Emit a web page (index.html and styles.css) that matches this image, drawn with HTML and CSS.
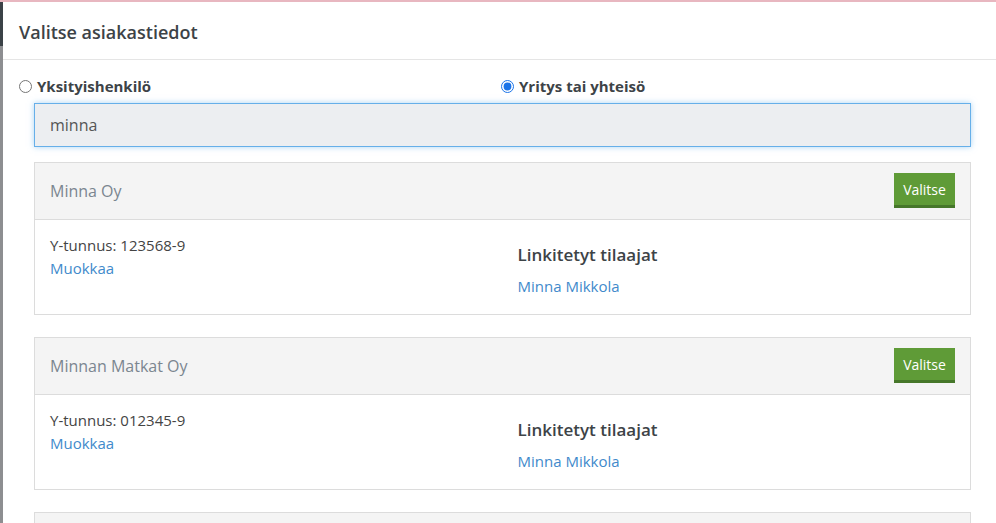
FILE: index.html
```html
<!DOCTYPE html>
<html lang="fi">
<head>
<meta charset="utf-8">
<title>Valitse asiakastiedot</title>
<link rel="stylesheet" href="styles.css">
</head>
<body>
<div class="page">
  <div class="stripe"><div class="stripe-top"></div></div>
  <div class="modal">
    <div class="modal-header">
      <h4 class="modal-title">Valitse asiakastiedot</h4>
    </div>
    <div class="modal-body">
      <div class="radio-row">
        <label class="radio"><input type="radio" name="type"> Yksityishenkilö</label>
        <label class="radio"><input type="radio" name="type" checked> Yritys tai yhteisö</label>
      </div>
      <div class="search-wrap">
        <input class="search" type="text" value="minna">
      </div>
      <div class="card">
        <div class="card-header">
          <span class="card-title">Minna Oy</span>
          <button class="btn">Valitse</button>
        </div>
        <div class="card-body">
          <div class="col">
            <div class="info">Y-tunnus: 123568-9</div>
            <a class="link" href="#">Muokkaa</a>
          </div>
          <div class="col">
            <div class="col-heading">Linkitetyt tilaajat</div>
            <a class="link link-person" href="#">Minna Mikkola</a>
          </div>
        </div>
      </div>
      <div class="card">
        <div class="card-header">
          <span class="card-title">Minnan Matkat Oy</span>
          <button class="btn">Valitse</button>
        </div>
        <div class="card-body">
          <div class="col">
            <div class="info">Y-tunnus: 012345-9</div>
            <a class="link" href="#">Muokkaa</a>
          </div>
          <div class="col">
            <div class="col-heading">Linkitetyt tilaajat</div>
            <a class="link link-person" href="#">Minna Mikkola</a>
          </div>
        </div>
      </div>
      <div class="card card-partial">
        <div class="card-header"></div>
      </div>
    </div>
  </div>
</div>
</body>
</html>
```
FILE: styles.css
```css
* { box-sizing: border-box; }
html, body { margin: 0; padding: 0; height: 100%; overflow: hidden; }
body {
  font-family: "Open Sans", "Liberation Sans", sans-serif;
  color: #444;
  background: #fff;
}
.page {
  display: flex;
  height: 523px;
  border-top: 2px solid #e8b7c0;
}
.stripe {
  width: 3px;
  flex: none;
  background: #8d8e91;
  display: flex;
  flex-direction: column;
}
.stripe-top {
  height: 44px;
  background: #3b4247;
}
.modal {
  flex: 1;
  background: #fff;
  overflow: hidden;
}
.modal-header {
  height: 58px;
  border-bottom: 1px solid #e5e5e5;
  display: flex;
  align-items: center;
  padding: 0 16px;
}
.modal-title {
  margin: 0;
  font-size: 18px;
  font-weight: 600;
  color: #3d4347;
  padding-top: 2px;
}
.modal-body {
  padding: 14px 25px 0 16px;
}
.radio-row {
  display: grid;
  grid-template-columns: 482px 1fr;
  height: 24px;
  align-items: center;
}
.radio {
  display: flex;
  align-items: center;
  gap: 5px;
  font-size: 15px;
  font-weight: 700;
  color: #3d4347;
}
.radio input {
  margin: 0;
  width: 13px;
  height: 13px;
  accent-color: #1a73e8;
}
.search-wrap {
  padding: 5px 0 0 15px;
  margin-bottom: 15px;
}
.search {
  display: block;
  width: 100%;
  height: 44px;
  border: 1px solid #66afe9;
  background: #eceef1;
  box-shadow: 0 0 6px rgba(102, 175, 233, 0.55);
  font-family: inherit;
  font-size: 16px;
  color: #555;
  padding: 0 15px;
  outline: none;
}
.card {
  margin-left: 15px;
  border: 1px solid #dcdcdc;
  margin-bottom: 22px;
}
.card-header {
  height: 57px;
  background: #f4f4f4;
  border-bottom: 1px solid #dcdcdc;
  display: flex;
  align-items: center;
  justify-content: space-between;
  padding: 0 15px;
}
.card-title {
  font-size: 16px;
  color: #7b8690;
}
.btn {
  width: 61px;
  height: 35px;
  border: none;
  border-bottom: 3px solid #46772a;
  background: #5f9b37;
  color: #fff;
  font-family: inherit;
  font-size: 14px;
  padding: 0;
  margin-bottom: 1px;
}
.card-body {
  height: 94px;
  display: grid;
  grid-template-columns: 1fr 1fr;
  padding: 14px 15px 0;
  column-gap: 30px;
}
.col { display: flex; flex-direction: column; align-items: flex-start; }
.info {
  font-size: 15px;
  line-height: 23px;
  color: #444;
}
.link {
  font-size: 15px;
  line-height: 23px;
  color: #3f8acb;
  text-decoration: none;
}
.col-heading {
  margin-top: 9px;
  font-size: 17px;
  font-weight: 600;
  line-height: 24px;
  color: #3d4347;
}
.link-person {
  margin-top: 8px;
}
.card-partial .card-header { border-bottom: none; }
```
